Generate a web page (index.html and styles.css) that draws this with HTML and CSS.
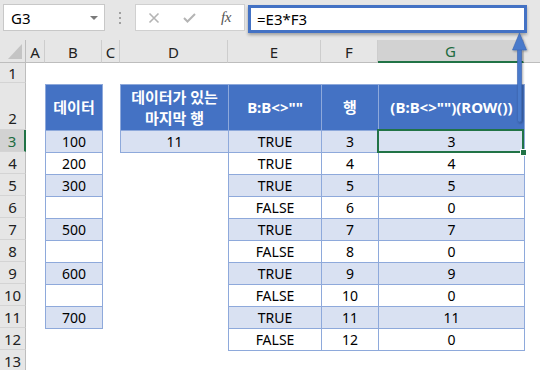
FILE: index.html
```html
<!DOCTYPE html>
<html lang="ko">
<head>
<meta charset="utf-8">
<link rel="stylesheet" href="styles.css">
</head>
<body>
<div class="app">
  <div class="toolbar">
    <div class="namebox"><span>G3</span><span class="caret"></span></div>
    <div class="dots"><i></i><i></i><i></i></div>
    <div class="fxbox">
      <svg class="ico-x" width="12" height="12" viewBox="0 0 12 12"><path d="M1.5 1.5 L10.5 10.5 M10.5 1.5 L1.5 10.5" stroke="#b4b4b4" stroke-width="1.6" fill="none"/></svg>
      <svg class="ico-ok" width="13" height="10" viewBox="0 0 13 10"><path d="M1 5 L4.5 8.5 L12 1" stroke="#b4b4b4" stroke-width="2" fill="none"/></svg>
      <span class="fx">fx</span>
    </div>
    <div class="formula">=E3*F3</div>
  </div>
  <div class="sheet">
    <div class="ch corner"></div>
    <div class="ch">A</div>
    <div class="ch">B</div>
    <div class="ch">C</div>
    <div class="ch">D</div>
    <div class="ch">E</div>
    <div class="ch">F</div>
    <div class="ch ch-sel">G</div>
    <div class="ch ch-last"></div>

    <div class="rh">1</div>

    <div class="rh rh-tall">2</div>
    <div class="t h cB">데이터</div>
    <div class="t h cD">데이터가 있는<br>마지막 행</div>
    <div class="t h cE">B:B&lt;&gt;""</div>
    <div class="t h cF">행</div>
    <div class="t h cG">(B:B&lt;&gt;"")(ROW())</div>

    <div class="rh rh-sel">3</div>
    <div class="t l cB">100</div>
    <div class="t l cD">11</div>
    <div class="t l cE">TRUE</div>
    <div class="t l cF">3</div>
    <div class="t l cG sel">3</div>

    <div class="rh">4</div>
    <div class="t cB">200</div>
    <div class="t cE">TRUE</div>
    <div class="t cF">4</div>
    <div class="t cG">4</div>

    <div class="rh">5</div>
    <div class="t l cB">300</div>
    <div class="t l cE">TRUE</div>
    <div class="t l cF">5</div>
    <div class="t l cG">5</div>

    <div class="rh">6</div>
    <div class="t cB"></div>
    <div class="t cE">FALSE</div>
    <div class="t cF">6</div>
    <div class="t cG">0</div>

    <div class="rh">7</div>
    <div class="t l cB">500</div>
    <div class="t l cE">TRUE</div>
    <div class="t l cF">7</div>
    <div class="t l cG">7</div>

    <div class="rh">8</div>
    <div class="t cB"></div>
    <div class="t cE">FALSE</div>
    <div class="t cF">8</div>
    <div class="t cG">0</div>

    <div class="rh">9</div>
    <div class="t l cB">600</div>
    <div class="t l cE">TRUE</div>
    <div class="t l cF">9</div>
    <div class="t l cG">9</div>

    <div class="rh">10</div>
    <div class="t cB"></div>
    <div class="t cE">FALSE</div>
    <div class="t cF">10</div>
    <div class="t cG">0</div>

    <div class="rh">11</div>
    <div class="t l cB">700</div>
    <div class="t l cE">TRUE</div>
    <div class="t l cF">11</div>
    <div class="t l cG">11</div>

    <div class="rh">12</div>
    <div class="t cE">FALSE</div>
    <div class="t cF">12</div>
    <div class="t cG">0</div>

    <div class="rh">13</div>
  </div>
  <svg class="arrow" width="28" height="100" viewBox="0 0 28 100">
    <defs>
      <filter id="sh" x="-50%" y="-20%" width="200%" height="140%">
        <feDropShadow dx="1" dy="1" stdDeviation="0.8" flood-color="#000" flood-opacity="0.35"/>
      </filter>
    </defs>
    <g filter="url(#sh)">
      <rect x="11.5" y="18" width="4" height="76" rx="2" fill="#4a7acb" stroke="#3b64b0" stroke-width="0.6"/>
      <polygon points="13.5,5 6.5,22 20.5,22" fill="#4a7acb" stroke="#3b64b0" stroke-width="0.6"/>
    </g>
  </svg>
</div>
</body>
</html>
```
FILE: styles.css
```css
html, body {
  margin: 0;
  padding: 0;
  background: #ffffff;
}

.app {
  position: relative;
  width: 540px;
  height: 370px;
  overflow: hidden;
  font-family: "Noto Sans", "Noto Sans CJK KR", sans-serif;
  color: #000;
}

.toolbar {
  height: 40px;
  box-sizing: border-box;
  background: #e6e6e6;
  display: flex;
  align-items: flex-start;
  padding: 4px 0 0 3px;
}

.namebox {
  width: 102px;
  height: 27px;
  box-sizing: border-box;
  background: #fff;
  border: 1px solid #c8c8c8;
  display: flex;
  align-items: center;
  justify-content: space-between;
  padding: 0 6px 0 7px;
  font-size: 15px;
}

.caret {
  width: 0;
  height: 0;
  border-left: 4px solid transparent;
  border-right: 4px solid transparent;
  border-top: 4px solid #7a7a7a;
}

.dots {
  width: 30px;
  height: 27px;
  display: flex;
  flex-direction: column;
  align-items: center;
  justify-content: center;
  gap: 3px;
}

.dots i {
  display: block;
  width: 2px;
  height: 2px;
  background: #a0a0a0;
}

.fxbox {
  width: 110px;
  height: 27px;
  box-sizing: border-box;
  background: #fff;
  border: 1px solid #d0d0d0;
  display: flex;
  align-items: center;
  padding-left: 12px;
}

.ico-x { margin-right: 23px; }
.ico-ok { margin-right: 25px; }

.fx {
  font-family: "Liberation Serif", serif;
  font-style: italic;
  font-size: 15px;
  color: #555;
  letter-spacing: -0.5px;
}

.formula {
  margin: 1px 0 0 3px;
  width: 279px;
  height: 28px;
  box-sizing: border-box;
  border: 3px solid #4472c4;
  background: #fff;
  box-shadow: 0 2px 3px rgba(0, 0, 0, 0.3);
  font-size: 15px;
  line-height: 22px;
  padding-left: 6px;
}

.sheet {
  display: grid;
  grid-template-columns: 26px 19px 57px 18px 108px 93px 57px 146px 1fr;
  grid-template-rows: 23px 20px 47px repeat(11, 22px);
}

.ch {
  background: #e6e6e6;
  border-right: 1px solid #cdcdcd;
  border-bottom: 1px solid #bdbdbd;
  display: flex;
  align-items: center;
  justify-content: center;
  font-size: 15px;
  color: #222;
  padding-top: 1px;
}

.ch-last { border-right: none; }

.ch-sel {
  background: #d2d2d2;
  border-bottom: 2px solid #217346;
  color: #1d6b40;
}

.corner {
  position: relative;
  border-right-color: #bdbdbd;
}

.corner::after {
  content: "";
  position: absolute;
  right: 3px;
  bottom: 3px;
  width: 14px;
  height: 15px;
  background: #c4c4c4;
  clip-path: polygon(100% 0, 100% 100%, 0 100%);
}

.rh {
  grid-column: 1;
  background: #e6e6e6;
  border-right: 1px solid #bdbdbd;
  border-bottom: 1px solid #d4d4d4;
  display: flex;
  align-items: center;
  justify-content: center;
  font-size: 15px;
  color: #222;
}

.rh-tall {
  align-items: flex-end;
  padding-bottom: 1px;
}

.rh-sel {
  background: #d2d2d2;
  border-right: 2px solid #217346;
  color: #1d6b40;
}

.cB { grid-column: 3; }
.cD { grid-column: 5; }
.cE { grid-column: 6; }
.cF { grid-column: 7; }
.cG { grid-column: 8; }

.t {
  border: 1px solid #8ea9db;
  margin: 0 -1px -1px 0;
  display: flex;
  align-items: center;
  justify-content: center;
  font-size: 14px;
  background: #fff;
  white-space: nowrap;
}

.l { background: #d9e1f2; }

.h {
  background: #4472c4;
  color: #fff;
  font-weight: bold;
  font-size: 15px;
  line-height: 21px;
  text-align: center;
  margin-top: 1px;
  border-color: #8ea9db;
}

.sel {
  position: relative;
}

.sel::before {
  content: "";
  position: absolute;
  top: -2px;
  left: -2px;
  right: 0;
  bottom: -1px;
  border: 2px solid #217346;
}

.sel::after {
  content: "";
  position: absolute;
  right: -3px;
  bottom: -4px;
  width: 5px;
  height: 5px;
  background: #217346;
  border: 1px solid #fff;
}

.arrow {
  position: absolute;
  left: 506px;
  top: 28px;
}
```
